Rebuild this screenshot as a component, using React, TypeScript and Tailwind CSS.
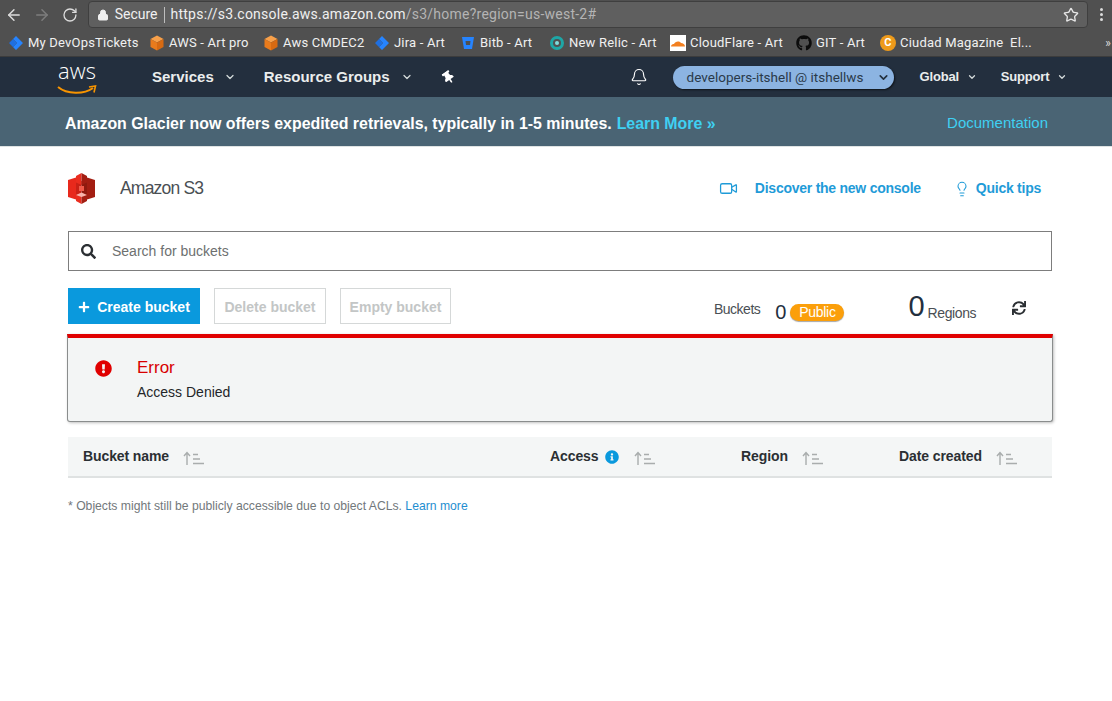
import { ArrowLeft, ArrowRight, RotateCw, Lock, Star, Bell, ChevronDown, Video, Lightbulb } from "lucide-react";
import { FaExclamationCircle, FaGithub, FaInfoCircle, FaPlus, FaSearch, FaSync, FaThumbtack } from "react-icons/fa";

const bookmarks = [
  { label: "My DevOpsTickets", icon: "jira", width: "w-[141px]" },
  { label: "AWS - Art pro", icon: "box", width: "w-[114px]" },
  { label: "Aws CMDEC2", icon: "box", width: "w-[111px]" },
  { label: "Jira - Art", icon: "jira", width: "w-[86px]" },
  { label: "Bitb - Art", icon: "bitb", width: "w-[89px]" },
  { label: "New Relic - Art", icon: "relic", width: "w-[121px]" },
  { label: "CloudFlare - Art", icon: "cloud", width: "w-[126px]" },
  { label: "GIT - Art", icon: "git", width: "w-[84px]" },
  { label: "Ciudad Magazine  El...", icon: "c", width: "w-[160px]" },
];

function BookmarkIcon({ kind }: { kind: string }) {
  if (kind === "jira") {
    return (
      <svg width="16" height="16" viewBox="0 0 16 16">
        <path d="M8 1 L15 8 L8 15 L5 12 L9 8 L5 4 Z" fill="#2684ff" />
        <path d="M8 1 L5 4 L9 8 L5 12 L8 15 L1 8 Z" fill="#1f6fe0" />
      </svg>
    );
  }
  if (kind === "box") {
    return (
      <svg width="16" height="16" viewBox="0 0 16 16">
        <path d="M8 0.5 L14.5 4 L8 7.5 L1.5 4 Z" fill="#f7a04a" />
        <path d="M1.5 4 L8 7.5 V15.5 L1.5 12 Z" fill="#e97b1c" />
        <path d="M14.5 4 L8 7.5 V15.5 L14.5 12 Z" fill="#d76a12" />
      </svg>
    );
  }
  if (kind === "bitb") {
    return (
      <svg width="16" height="16" viewBox="0 0 16 16">
        <path d="M2 2 H14 L12 14 H4 Z" fill="#2684ff" />
        <path d="M5.5 6 H10.5 L10 10 H6 Z" fill="#505050" />
      </svg>
    );
  }
  if (kind === "relic") {
    return (
      <svg width="16" height="16" viewBox="0 0 16 16">
        <circle cx="8" cy="8" r="5.5" fill="none" stroke="#1ea6a6" strokeWidth="3" />
        <circle cx="8" cy="8" r="2" fill="#7fdcdc" />
      </svg>
    );
  }
  if (kind === "cloud") {
    return (
      <svg width="16" height="16" viewBox="0 0 16 16">
        <rect width="16" height="16" fill="#ffffff" />
        <path d="M1 11.5 C1 9.5 3 9 4 9 C5 6.5 9 5.5 11 8 C13 8 15 9.5 15 11.5 Z" fill="#f38020" />
      </svg>
    );
  }
  if (kind === "git") {
    return <FaGithub size={16} className="text-[#0c0c0c]" />;
  }
  return (
    <div className="flex h-4 w-4 items-center justify-center rounded-full bg-[#ee9a1a] text-[11px] font-bold leading-none text-white">C</div>
  );
}

function SortIcon() {
  return (
    <svg width="21" height="14" viewBox="0 0 21 14" className="text-[#a9adad]" fill="none" stroke="currentColor">
      <path d="M4 14 V2 M1 5 L4 1.5 L7 5" strokeWidth="1.4" />
      <path d="M10 3.5 H15 M10 8 H17 M10 12.5 H21" strokeWidth="1.5" />
    </svg>
  );
}

function S3Logo() {
  return (
    <svg width="27" height="31" viewBox="0 0 27 31">
      <path d="M0 7 L8 4.5 V26.5 L0 24 Z" fill="#e8291c" />
      <path d="M27 7 L19 4.5 V26.5 L27 24 Z" fill="#a31e12" />
      <rect x="8" y="8" width="5.5" height="15" fill="#c92116" />
      <rect x="13.5" y="8" width="5.5" height="15" fill="#8f1a0f" />
      <path d="M13.5 0 L8 3 V9.5 L13.5 12 Z" fill="#ea2d1f" />
      <path d="M13.5 0 L19 3 V9.5 L13.5 12 Z" fill="#a31e12" />
      <path d="M13.5 20 L8 22 V28 L13.5 31 Z" fill="#ea2d1f" />
      <path d="M13.5 20 L19 22 V28 L13.5 31 Z" fill="#a31e12" />
      <path d="M13.5 19.5 L8 22 L13.5 24 L19 22 Z" fill="#f8b4ac" />
      <rect x="11" y="13" width="5" height="5" fill="#f05a4a" />
    </svg>
  );
}

export default function App() {
  return (
    <div className="h-[701px] w-[1112px] overflow-hidden bg-white font-['Liberation_Sans',sans-serif] text-[#16191f]">
      {/* browser chrome */}
      <div className="flex h-[29px] items-center bg-[#505050] pl-[5px] pr-[9px]">
        <ArrowLeft size={18} className="text-[#dcdcdc]" />
        <ArrowRight size={18} className="ml-[10px] text-[#7d7d7d]" />
        <RotateCw size={16} className="ml-[11px] text-[#dcdcdc]" />
        <div className="ml-[10px] flex h-[27px] w-[1006px] items-center rounded-[4px] border border-[#3f3f3f] bg-[#5f5f5f] pl-[8px] pr-[8px] font-['Roboto',sans-serif] text-[14px]">
          <Lock size={12} fill="#f0f0f0" className="text-[#f0f0f0]" />
          <span className="ml-[6px] text-[#f0f0f0]">Secure</span>
          <span className="mx-[6px] h-[16px] w-px bg-[#bdbdbd]" />
          <span className="tracking-[0.24px] text-[#f0f0f0]">https://s3.console.aws.amazon.com</span>
          <span className="tracking-[0.24px] text-[#b4b4b4]">/s3/home?region=us-west-2#</span>
          <Star size={16} className="ml-auto text-[#e6e6e6]" />
        </div>
        <div className="ml-[12px] flex flex-col gap-[2px]">
          <span className="h-[3px] w-[3px] rounded-full bg-[#dcdcdc]" />
          <span className="h-[3px] w-[3px] rounded-full bg-[#dcdcdc]" />
          <span className="h-[3px] w-[3px] rounded-full bg-[#dcdcdc]" />
        </div>
      </div>
      <div className="flex h-[28px] items-center border-b border-[#3c3c3c] bg-[#505050] pl-[8px] font-['Roboto',sans-serif] text-[13px] tracking-[0.2px] text-[#f0f0f0]">
        {bookmarks.map((b) => (
          <div key={b.label} className={`flex items-center gap-[4px] whitespace-pre ${b.width}`}>
            <BookmarkIcon kind={b.icon} />
            <span>{b.label}</span>
          </div>
        ))}
        <span className="ml-auto pr-[1px] text-[12px] text-[#dcdcdc]">»</span>
      </div>

      {/* aws console nav */}
      <div className="flex h-[40px] items-center bg-[#232f3e] text-white">
        <div className="relative ml-[57px] h-[40px] w-[40px]">
          <span className="block text-center font-['Open_Sans',sans-serif] text-[22px] font-light leading-[26px] text-white">aws</span>
          <svg width="40" height="11" viewBox="0 0 40 11" className="absolute left-0 top-[28px]">
            <path d="M1 2 C10 9.5 27 9.5 36 3" fill="none" stroke="#f79400" strokeWidth="2" />
            <path d="M32 2 L38.5 1 L37 7.5" fill="none" stroke="#f79400" strokeWidth="1.6" />
          </svg>
        </div>
        <span className="ml-[55px] text-[15px] font-bold text-[#eaeded]">Services</span>
        <ChevronDown size={12} strokeWidth={2.5} className="ml-[10px] text-[#d5dbdb]" />
        <span className="ml-[28px] text-[15px] font-bold text-[#eaeded]">Resource Groups</span>
        <ChevronDown size={12} strokeWidth={2.5} className="ml-[11px] text-[#d5dbdb]" />
        <FaThumbtack size={13} className="ml-[29px] rotate-[-35deg] text-white" />
        <Bell size={18} strokeWidth={1.5} className="ml-[175px] text-white" />
        <div className="relative ml-[25px] flex h-[23px] w-[221px] items-center rounded-full bg-[#8cb4e2] pl-[14px] font-['Roboto',sans-serif] text-[13.5px] text-[#2a3a4a] shadow-[1px_1px_2px_rgba(0,0,0,0.6)]">
          developers-itshell @ itshellws
          <ChevronDown size={13} strokeWidth={3} className="absolute right-[4px] text-[#24313f]" />
        </div>
        <span className="ml-[26px] text-[13px] font-bold tracking-[-0.2px] text-[#eaeded]">Global</span>
        <ChevronDown size={10} strokeWidth={3} className="ml-[8px] text-[#d5dbdb]" />
        <span className="ml-[24px] text-[13px] font-bold tracking-[-0.2px] text-[#eaeded]">Support</span>
        <ChevronDown size={10} strokeWidth={3} className="ml-[8px] text-[#d5dbdb]" />
      </div>
      <div className="flex h-[50px] items-center border-b border-[#dfe3e3] bg-[#4a6474] pl-[65px] pr-[64px] pt-[4px] text-[15.9px] font-bold text-white">
        <span>Amazon Glacier now offers expedited retrievals, typically in 1-5 minutes.</span>
        <span className="ml-[5px] text-[#3fd0f2]">Learn More »</span>
        <span className="ml-auto text-[15px] font-normal text-[#3fd0f2]">Documentation</span>
      </div>

      {/* page */}
      <div className="pl-[68px] pr-[60px]">
        <div className="flex h-[84px] items-center pb-[1px] pr-[11px]">
          <S3Logo />
          <span className="ml-[25px] text-[17.5px] font-light tracking-[-0.8px] text-[#4a4f54]">Amazon S3</span>
          <Video size={19} strokeWidth={1.6} className="ml-auto text-[#1f9bd8]" />
          <span className="ml-[17px] text-[14px] font-bold tracking-[-0.25px] text-[#1f9bd8]">Discover the new console</span>
          <Lightbulb size={16} strokeWidth={1.6} className="ml-[33px] text-[#1f9bd8]" />
          <span className="ml-[6px] text-[14px] font-bold tracking-[-0.25px] text-[#1f9bd8]">Quick tips</span>
        </div>
        <div className="flex h-[40px] items-center border border-[#7d7d7d] pl-[12px] text-[14px] text-[#6d7070]">
          <FaSearch size={15} className="text-[#2b2f33]" />
          <span className="ml-[16px]">Search for buckets</span>
        </div>
        <div className="mt-[17px] flex h-[36px] items-center">
          <div className="flex h-[36px] w-[132px] items-center justify-center bg-[#0a99dd] pt-[2px] text-[14px] font-bold text-white">
            <FaPlus size={12} className="mr-[7px]" />
            Create bucket
          </div>
          <div className="ml-[14px] flex h-[36px] w-[112px] items-center justify-center border border-[#d5d8d8] pt-[2px] text-[14px] font-bold text-[#c3c6c6]">Delete bucket</div>
          <div className="ml-[14px] flex h-[36px] w-[111px] items-center justify-center border border-[#d5d8d8] pt-[2px] text-[14px] font-bold text-[#c3c6c6]">Empty bucket</div>
          <span className="ml-[263px] mt-[6px] text-[14px] font-light tracking-[-0.5px] text-[#4a4f54]">Buckets</span>
          <span className="ml-[15px] mt-[12px] text-[20px] text-[#232f3e]">0</span>
          <span className="ml-[4px] mt-[12px] flex h-[17px] w-[54px] items-center justify-center rounded-full bg-[#fb9f0b] text-[14px] tracking-[-0.3px] text-white shadow-[0_1px_1px_rgba(0,0,0,0.35)]">Public</span>
          <span className="ml-[64px] mt-[1px] text-[29px] leading-none text-[#232f3e]">0</span>
          <span className="ml-[3px] mt-[14px] text-[14px] font-light tracking-[-0.4px] text-[#4a4f54]">Regions</span>
          <FaSync size={14} className="ml-[36px] mt-[4px] text-[#2b2f33]" />
        </div>
      </div>

      <div className="ml-[67px] mt-[10px] h-[88px] w-[986px] rounded-b-[3px] border-x border-b border-t-[4px] border-x-[#8a8d8d] border-b-[#8a8d8d] border-t-[#e00000] bg-[#f3f5f5] shadow-[1px_1px_3px_rgba(0,0,0,0.25)]">
        <div className="flex pl-[27px] pt-[20px]">
          <FaExclamationCircle size={17} className="mt-[2px] text-[#e00000]" />
          <div className="ml-[25px]">
            <div className="text-[17px] leading-[20px] text-[#d80000]">Error</div>
            <div className="mt-[5px] text-[14px] leading-[18px] text-[#232629]">Access Denied</div>
          </div>
        </div>
      </div>

      <div className="pl-[68px] pr-[60px]">
        <div className="mt-[15px] grid h-[41px] grid-cols-[467px_191px_158px_1fr] items-center border-b-2 border-[#dfe2e2] bg-[#f4f6f6] pl-[15px] text-[14px] font-bold tracking-[-0.1px] text-[#2b2f33]">
          <div className="flex items-center">
            <span>Bucket name</span>
            <span className="ml-[14px] mt-[3px]"><SortIcon /></span>
          </div>
          <div className="flex items-center">
            <span>Access</span>
            <FaInfoCircle size={14} className="ml-[7px] text-[#0a99dd]" />
            <span className="ml-[15px] mt-[3px]"><SortIcon /></span>
          </div>
          <div className="flex items-center">
            <span>Region</span>
            <span className="ml-[14px] mt-[3px]"><SortIcon /></span>
          </div>
          <div className="flex items-center">
            <span>Date created</span>
            <span className="ml-[14px] mt-[3px]"><SortIcon /></span>
          </div>
        </div>
        <p className="mt-[20px] text-[12.2px] leading-[16px] text-[#72787b]">
          * Objects might still be publicly accessible due to object ACLs. <span className="text-[#1f8ed0]">Learn more</span>
        </p>
      </div>
    </div>
  );
}
